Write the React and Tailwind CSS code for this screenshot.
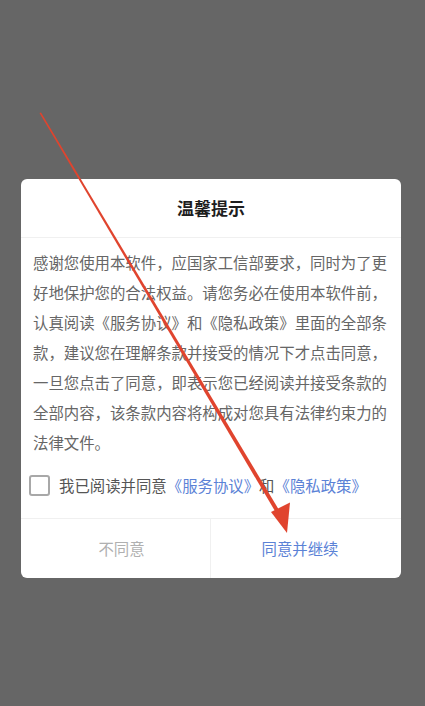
import React from "react";

const font = { fontFamily: '"Noto Sans CJK SC", "Noto Sans", sans-serif' };

function Arrow() {
  // red annotation arrow drawn over the dialog
  return (
    <svg className="absolute inset-0 pointer-events-none" width="425" height="706" viewBox="0 0 425 706">
      <polygon points="39.5,113 41,112.5 282,515 278.5,517" fill="#e0442e" />
      <polygon points="271,512 290,502.5 287,533" fill="#e0442e" />
    </svg>
  );
}

export default function App() {
  return (
    <div className="relative w-[425px] h-[706px] bg-[#666666] overflow-hidden" style={font}>
      <div className="pt-[179px] pl-[21px]">
        <div className="w-[380px] bg-white rounded-[6px] overflow-hidden">
          <div className="h-[59px] flex items-center justify-center border-b border-[#f0f0f0]">
            <span className="text-[17px] font-bold text-[#1e1e1e]">温馨提示</span>
          </div>
          <div className="px-[12px] pt-[9px] text-[15.4px] leading-[30px] text-[#666666]">
            感谢您使用本软件，应国家工信部要求，同时为了更好地保护您的合法权益。请您务必在使用本软件前，认真阅读《服务协议》和《隐私政策》里面的全部条款，建议您在理解条款并接受的情况下才点击同意，一旦您点击了同意，即表示您已经阅读并接受条款的全部内容，该条款内容将构成对您具有法律约束力的法律文件。
          </div>
          <div className="flex items-center gap-[9px] px-[8px] pt-[17px] pb-[21px]">
            <div className="w-[21px] h-[21px] border-2 border-[#a8a8a8] rounded-[3px]" />
            <span className="text-[15.4px] text-[#555555]">
              我已阅读并同意<span className="text-[#5b82d6]">《服务协议》</span>和<span className="text-[#5b82d6]">《隐私政策》</span>
            </span>
          </div>
          <div className="flex border-t border-[#f0f0f0] h-[60px]">
            <div className="w-[190px] pl-[12px] flex items-center justify-center border-r border-[#f0f0f0] text-[15.4px] text-[#b0b0b0]">
              不同意
            </div>
            <div className="flex-1 pr-[12px] flex items-center justify-center text-[15.4px] text-[#5b82d6]">
              同意并继续
            </div>
          </div>
        </div>
      </div>
      <Arrow />
    </div>
  );
}
